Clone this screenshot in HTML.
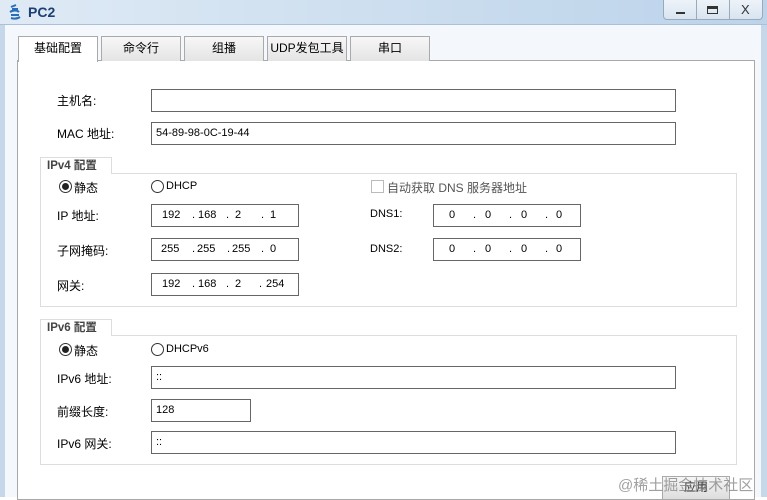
<!DOCTYPE html>
<html><head><meta charset="utf-8"><style>
*{box-sizing:border-box;margin:0;padding:0}
body{width:767px;height:497px;overflow:hidden;position:relative;background:#fff;font-family:"Liberation Sans","Noto Sans CJK SC",sans-serif;font-size:12px;color:#000}
.a{position:absolute}
.title{left:0;top:0;width:767px;height:25px;background:linear-gradient(to right,#dfeaf5,#c9dcee 60%,#bcd3ea);border-bottom:1px solid #aac0d8}
.lb{left:0;top:25px;width:5px;height:472px;background:#c6d7ea}
.rb{left:761px;top:25px;width:6px;height:472px;background:#c6d7ea}
.inner{left:5px;top:25px;width:756px;height:472px;background:#f4f8fd}
.tab{top:36px;height:25px;width:80px;border:1px solid #aaa;border-bottom:none;background:linear-gradient(#f7f7f7,#e4e4e4);text-align:center;line-height:23px;font-size:12px}
.panel{left:17px;top:60px;width:738px;height:440px;border:1px solid #a8a8a8;background:#fff}
.inp{border:1px solid #666;background:#fff;height:23px;line-height:21px;padding-left:4px;font-size:11px}
.grp{border:1px solid #ddd;background:#fff}
.gt{height:17px;font-weight:bold;color:#444;font-size:11.5px;padding-left:6px;line-height:17px;border:1px solid #ddd;border-bottom:none;background:#fff}
.radio{width:13px;height:13px;border:1px solid #333;border-radius:50%;background:#fff}
.radio.on::after{content:"";position:absolute;left:2px;top:2px;width:7px;height:7px;border-radius:50%;background:#222}
.ip span{position:absolute;top:0}
</style></head><body>
<div class="a title"></div>
<div class="a lb"></div><div class="a rb"></div>
<div class="a inner"></div>
<svg class="a" style="left:8px;top:4px" width="18" height="18" viewBox="0 0 18 18"><path d="M3 3l5-2M4 5h6M2 8c3-2 7-2 9 0M3 11h8M3 14c3 1 6 1 9-1" stroke="#2a6cb8" stroke-width="2" fill="none"/></svg>
<div class="a" style="left:28px;top:4px;font-size:14px;color:#1d3f73;font-weight:bold">PC2</div>
<div class="a" style="left:663px;top:0;width:100px;height:20px;border:1px solid #9ab;border-top:none;border-radius:0 0 4px 4px;background:linear-gradient(#eef3f9,#d8e4f1)"></div>
<div class="a" style="left:696px;top:0;width:1px;height:20px;background:#9ab"></div>
<div class="a" style="left:729px;top:0;width:1px;height:20px;background:#9ab"></div>
<div class="a" style="left:676px;top:12px;width:9px;height:2px;background:#333"></div>
<div class="a" style="left:707px;top:6px;width:11px;height:8px;border:1px solid #333;border-top:3px solid #333"></div>
<div class="a" style="left:741px;top:2px;font-size:13px;color:#333">X</div>
<div class="a panel"></div>
<div class="a tab" style="left:18px;background:#fff;height:26px">基础配置</div>
<div class="a tab" style="left:101px">命令行</div>
<div class="a tab" style="left:184px">组播</div>
<div class="a tab" style="left:267px">UDP发包工具</div>
<div class="a tab" style="left:350px">串口</div>

<div class="a" style="left:57px;top:92px">主机名:</div>
<div class="a inp" style="left:151px;top:89px;width:525px"></div>
<div class="a" style="left:57px;top:125px">MAC 地址:</div>
<div class="a inp" style="left:151px;top:122px;width:525px">54-89-98-0C-19-44</div>

<div class="a grp" style="left:40px;top:173px;width:697px;height:134px"></div>
<div class="a gt" style="left:40px;top:157px;width:72px">IPv4 配置</div>
<div class="a radio on" style="left:59px;top:180px"></div><div class="a" style="left:74px;top:179px">静态</div>
<div class="a radio" style="left:151px;top:180px"></div><div class="a" style="left:166px;top:180px;font-size:11px">DHCP</div>
<div class="a" style="left:371px;top:180px;width:13px;height:13px;border:1px solid #bbb"></div><div class="a" style="left:387px;top:179px;color:#555">自动获取 DNS 服务器地址</div>
<div class="a" style="left:57px;top:207px">IP 地址:</div>
<div class="a inp ip" style="left:151px;top:204px;width:148px"><span style="left:10px">192</span><span style="left:40px">.</span><span style="left:46px">168</span><span style="left:74px">.</span><span style="left:83px">2</span><span style="left:109px">.</span><span style="left:118px">1</span></div>
<div class="a" style="left:57px;top:242px">子网掩码:</div>
<div class="a inp ip" style="left:151px;top:238px;width:148px"><span style="left:9px">255</span><span style="left:40px">.</span><span style="left:45px">255</span><span style="left:75px">.</span><span style="left:80px">255</span><span style="left:109px">.</span><span style="left:118px">0</span></div>
<div class="a" style="left:57px;top:277px">网关:</div>
<div class="a inp ip" style="left:151px;top:273px;width:148px"><span style="left:10px">192</span><span style="left:40px">.</span><span style="left:46px">168</span><span style="left:74px">.</span><span style="left:83px">2</span><span style="left:107px">.</span><span style="left:114px">254</span></div>
<div class="a" style="left:370px;top:208px;font-size:11px">DNS1:</div>
<div class="a inp ip" style="left:433px;top:204px;width:148px"><span style="left:15px">0</span><span style="left:39px">.</span><span style="left:51px">0</span><span style="left:75px">.</span><span style="left:87px">0</span><span style="left:111px">.</span><span style="left:122px">0</span></div>
<div class="a" style="left:370px;top:243px;font-size:11px">DNS2:</div>
<div class="a inp ip" style="left:433px;top:238px;width:148px"><span style="left:15px">0</span><span style="left:39px">.</span><span style="left:51px">0</span><span style="left:75px">.</span><span style="left:87px">0</span><span style="left:111px">.</span><span style="left:122px">0</span></div>

<div class="a grp" style="left:40px;top:335px;width:697px;height:130px"></div>
<div class="a gt" style="left:40px;top:319px;width:72px">IPv6 配置</div>
<div class="a radio on" style="left:59px;top:343px"></div><div class="a" style="left:74px;top:342px">静态</div>
<div class="a radio" style="left:151px;top:343px"></div><div class="a" style="left:166px;top:343px;font-size:11px">DHCPv6</div>
<div class="a" style="left:57px;top:370px">IPv6 地址:</div>
<div class="a inp" style="left:151px;top:366px;width:525px">::</div>
<div class="a" style="left:57px;top:403px">前缀长度:</div>
<div class="a inp" style="left:151px;top:399px;width:100px">128</div>
<div class="a" style="left:57px;top:435px">IPv6 网关:</div>
<div class="a inp" style="left:151px;top:431px;width:525px">::</div>

<div class="a" style="left:662px;top:476px;width:68px;height:24px;border:1px solid #aaa;background:linear-gradient(#f6f6f6,#ddd);text-align:center;line-height:20px;color:#333">应用</div>
<div class="a" style="left:618px;top:474px;font-size:15px;color:rgba(120,120,120,0.7)">@稀土掘金技术社区</div>
</body></html>
